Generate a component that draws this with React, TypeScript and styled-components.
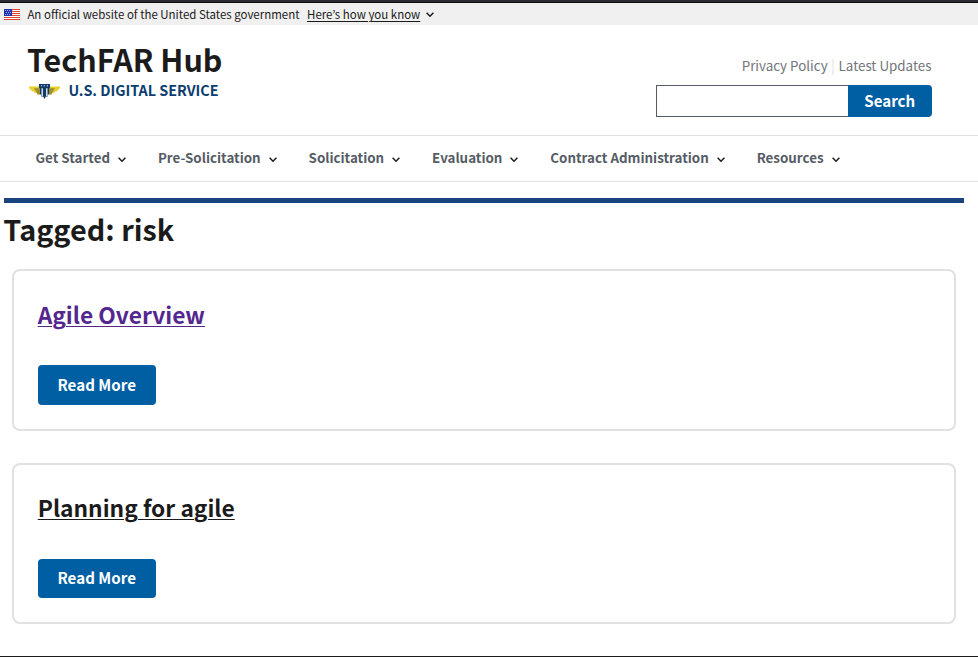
import React from "react";
import styled, { createGlobalStyle } from "styled-components";

const Global = createGlobalStyle`
  *, *::before, *::after { box-sizing: border-box; }
  html, body { margin: 0; background: #fff; overflow: hidden; }
  body { font-family: "Noto Sans CJK KR", "Noto Sans CJK SC", sans-serif; color: #1b1b1b; }
  h1, h2, p { margin: 0; }
`;

const Page = styled.div`
  display: flex;
  flex-direction: column;
  height: 657px;
`;

const TopEdge = styled.div`
  height: 3px;
  background: #2b2a33;
  border-bottom: 1px solid #0c0c0d;
`;

const Banner = styled.section`
  display: flex;
  align-items: center;
  height: 22px;
  padding-left: 4px;
  background: #f0f0f0;
  font-size: 11.47px;
  line-height: 22px;
  white-space: nowrap;
`;

const FlagIcon = styled.svg`
  margin-top: 1px;
`;

const BannerText = styled.p`
  margin: 0 7.6px 0 7.4px;
`;

const BannerLink = styled.a`
  text-decoration: underline;
  text-underline-offset: 2px;
  text-decoration-thickness: 1px;
`;

const BannerChevron = styled.span`
  display: flex;
  margin: 1px 0 0 5.4px;
`;

const Header = styled.header`
  display: flex;
  justify-content: space-between;
  height: 110px;
  padding: 0 46px 0 28px;
`;

const Brand = styled.div`
  padding-top: 15px;
`;

const SiteTitle = styled.div`
  margin-left: -1px;
  font-weight: 700;
  font-size: 30.45px;
  line-height: 38px;
  height: 39px;
`;

const Agency = styled.div`
  display: flex;
  align-items: center;
  gap: 7.4px;
  height: 22px;
  color: #0b3d70;
  font-weight: 700;
  font-size: 14.35px;
  line-height: 22px;
`;

const EagleIcon = styled.svg`
  margin-top: 2px;
`;

const Tools = styled.div`
  width: 276px;
  padding-top: 29px;
`;

const Links = styled.div`
  display: flex;
  justify-content: flex-end;
  height: 31px;
  padding-right: 0.6px;
  font-size: 13.36px;
  line-height: 23px;
  color: #71767a;
`;

const Divider = styled.span`
  width: 2px;
  height: 16px;
  margin: 5px 5px 0 4px;
  background: #f0f0f0;
`;

const SearchForm = styled.form`
  display: flex;
  height: 32px;
`;

const SearchInput = styled.input`
  flex: 1;
  min-width: 0;
  border: 1px solid #565c65;
  border-right: 0;
  border-radius: 0;
  outline: 0;
  background: #fff;
`;

const SearchButton = styled.button`
  width: 84px;
  padding: 0 0.6px 2px 0;
  border: 0;
  border-radius: 0 4px 4px 0;
  background: #005ea2;
  color: #fff;
  font: 700 15.1px/30px "Noto Sans CJK KR", sans-serif;
`;

const Nav = styled.nav`
  display: flex;
  gap: 31.9px;
  height: 47px;
  padding-left: 35.5px;
  border-top: 1px solid #dfe1e2;
  border-bottom: 1px solid #dfe1e2;
`;

const NavItem = styled.a`
  display: flex;
  gap: 8px;
  color: #565c65;
  font-weight: 700;
  font-size: 13.36px;
  line-height: 43px;
  white-space: nowrap;
`;

const NavChevron = styled.span`
  display: flex;
  margin-top: 21px;
  color: #1b1b1b;
`;

const Main = styled.main`
  width: 964px;
  flex: 1;
  padding: 16px 0 0 4px;
`;

const Heading = styled.h1`
  border-top: 5px solid #1a4480;
  height: 71.2px;
  padding-top: 5px;
  text-indent: -0.7px;
  font-size: 28.8px;
  line-height: 42px;
`;

const CardList = styled.div`
  display: flex;
  flex-direction: column;
  gap: 32px;
  padding: 0 8px;
`;

const Card = styled.article`
  height: 161.4px;
  padding: 26.5px 24px 0;
  border: 2px solid #dfe1e2;
  border-radius: 8px;
`;

const CardTitle = styled.h2<{ $visited?: boolean }>`
  font-size: 22.75px;
  line-height: 33px;
  height: 67.6px;
  text-indent: -0.3px;
  color: ${p => (p.$visited ? "#54278f" : "#1b1b1b")};
  text-decoration: underline;
  text-decoration-thickness: 1px;
  text-underline-offset: 2px;
`;

const ReadMore = styled.button`
  display: block;
  width: 118px;
  height: 39.4px;
  padding: 0 0.6px 2px 0;
  border: 0;
  border-radius: 4px;
  background: #005ea2;
  color: #fff;
  font: 700 15.15px/36px "Noto Sans CJK KR", sans-serif;
`;

const Footer = styled.footer`
  height: 1px;
  background: #1b1b1b;
`;

const Flag = () => (
  <FlagIcon width="16" height="11" viewBox="0 0 16 11">
    <rect width="16" height="11" fill="#fff" />
    {[0, 2, 4, 6, 8, 10].map(y => (
      <rect key={y} y={y} width="16" height="1" fill="#e0442a" />
    ))}
    <rect width="8" height="7" fill="#1e33b1" />
    {[1, 3, 5].map(y =>
      [1, 3, 5].map(x => (
        <rect key={`${x}-${y}`} x={x + (y === 3 ? 1 : 0)} y={y} width="1" height="1" fill="#a5aee0" />
      ))
    )}
  </FlagIcon>
);

const Eagle = () => (
  <EagleIcon width="33" height="16" viewBox="0 0 33 16">
    <path d="M.6 3.500h11v8H9.600L8.400 9.800H6.600L5.800 8.200H3.800L3 6.400H2z" fill="#e5cf2b" />
    <path d="M32.400 3.500h-11v8h2l1.200-1.700h1.800l.8-1.600h2l.8-1.800h1z" fill="#e5cf2b" />
    <path d="M6 5.200H12v6.300H9.600L8.400 9z M27 5.200H21v6.300h2.400l1.200-2.500z" fill="#a08f30" />
    <path d="M11 1h11v4.200h-1v6.300h-1.200v1.900h-2l-1.300 2.500-1.300-2.500h-2v-1.900H12V5.200h-1z" fill="#0f3b66" />
    <path d="M14.200 5.200v7.800M18.800 5.200v7.800" stroke="#e6edf2" strokeWidth="1.400" />
    <path d="M13 2.800h1.200M15.900 2.800h1.200M18.800 2.800h1.200" stroke="#dfe8ef" strokeWidth="1" />
  </EagleIcon>
);

const Chevron = () => (
  <svg width="8" height="6" viewBox="0 0 8 6" fill="none">
    <path d="M.6.8 4 4.200 7.400.8" stroke="currentColor" strokeWidth="1.500" />
  </svg>
);

const navItems = [
  "Get Started",
  "Pre-Solicitation",
  "Solicitation",
  "Evaluation",
  "Contract Administration",
  "Resources",
];

const results = [
  { title: "Agile Overview", visited: true },
  { title: "Planning for agile", visited: false },
];

export default function App() {
  return (
    <Page lang="en">
      <Global />
      <TopEdge />
      <Banner>
        <Flag />
        <BannerText>An official website of the United States government</BannerText>
        <BannerLink>Here’s how you know</BannerLink>
        <BannerChevron><Chevron /></BannerChevron>
      </Banner>
      <Header>
        <Brand>
          <SiteTitle>TechFAR Hub</SiteTitle>
          <Agency>
            <Eagle />
            U.S. DIGITAL SERVICE
          </Agency>
        </Brand>
        <Tools>
          <Links>
            <span>Privacy Policy</span>
            <Divider />
            <span>Latest Updates</span>
          </Links>
          <SearchForm>
            <SearchInput aria-label="Search" />
            <SearchButton type="button">Search</SearchButton>
          </SearchForm>
        </Tools>
      </Header>
      <Nav>
        {navItems.map(label => (
          <NavItem key={label}>
            {label}
            <NavChevron><Chevron /></NavChevron>
          </NavItem>
        ))}
      </Nav>
      <Main>
        <Heading>Tagged: risk</Heading>
        <CardList>
          {results.map(r => (
            <Card key={r.title}>
              <CardTitle $visited={r.visited}>{r.title}</CardTitle>
              <ReadMore>Read More</ReadMore>
            </Card>
          ))}
        </CardList>
      </Main>
      <Footer />
    </Page>
  );
}
